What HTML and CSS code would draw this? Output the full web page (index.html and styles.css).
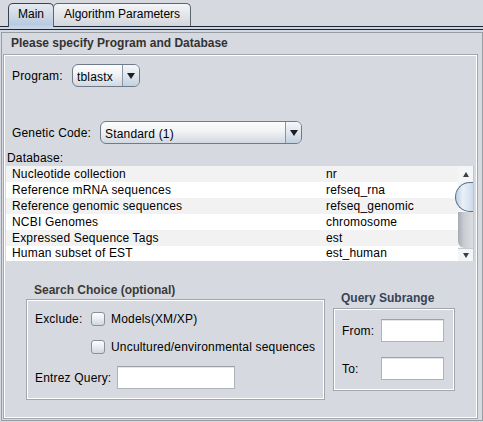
FILE: index.html
```html
<!DOCTYPE html>
<html>
<head>
<meta charset="utf-8">
<link rel="stylesheet" href="styles.css">
</head>
<body>
<div class="tabs">
  <div class="tab sel">Main</div>
  <div class="tab">Algorithm Parameters</div>
</div>
<div class="band"></div>
<div class="content">
  <div class="title">Please specify Program and Database</div>
  <div class="panel">
    <div class="row prog">
      <span class="lbl w-prog">Program:</span>
      <div class="combo c-prog"><span class="val">tblastx</span><span class="arrow"><span class="tri-dn"></span></span></div>
    </div>
    <div class="row gen">
      <span class="lbl w-gen">Genetic Code:</span>
      <div class="combo c-gen"><span class="val">Standard (1)</span><span class="arrow"><span class="tri-dn"></span></span></div>
    </div>
    <div class="dblabel">Database:</div>
    <div class="dbwrap">
      <div class="table">
        <div class="tr"><span>Nucleotide collection</span><span>nr</span></div>
        <div class="tr"><span>Reference mRNA sequences</span><span>refseq_rna</span></div>
        <div class="tr"><span>Reference genomic sequences</span><span>refseq_genomic</span></div>
        <div class="tr"><span>NCBI Genomes</span><span>chromosome</span></div>
        <div class="tr"><span>Expressed Sequence Tags</span><span>est</span></div>
        <div class="tr last"><span>Human subset of EST</span><span>est_human</span></div>
      </div>
      <div class="sb">
        <div class="sb-btn top"><span class="tri-up"></span></div>
        <div class="sb-thumb"></div>
        <div class="sb-track"></div>
        <div class="sb-btn bot"><span class="tri-dn small"></span></div>
      </div>
    </div>
    <div class="lower">
      <div class="col search">
        <div class="gtitle">Search Choice (optional)</div>
        <div class="gbox sbox">
          <div class="srow r1">
            <span class="lbl w-exc">Exclude:</span>
            <span class="check"></span>
            <span class="ctext">Models(XM/XP)</span>
          </div>
          <div class="srow r2">
            <span class="check indent"></span>
            <span class="ctext">Uncultured/environmental sequences</span>
          </div>
          <div class="srow r3">
            <span class="lbl w-ent">Entrez Query:</span>
            <span class="input i-ent"></span>
          </div>
        </div>
      </div>
      <div class="col query">
        <div class="gtitle blue">Query Subrange</div>
        <div class="gbox qbox">
          <div class="srow q1">
            <span class="lbl w-q">From:</span>
            <span class="input i-q"></span>
          </div>
          <div class="srow q2">
            <span class="lbl w-q">To:</span>
            <span class="input i-q"></span>
          </div>
        </div>
      </div>
    </div>
  </div>
</div>
</body>
</html>
```
FILE: styles.css
```css
* { box-sizing: border-box; }
html, body { margin: 0; padding: 0; }
body {
  width: 483px;
  height: 422px;
  overflow: hidden;
  background: #d6d9df;
  font-family: "Liberation Sans", Arial, sans-serif;
  font-size: 12px;
  letter-spacing: 0.18px;
  color: #000;
}

/* Tabs */
.tabs {
  display: flex;
  align-items: flex-end;
  height: 27px;
  padding-left: 8px;
  border-bottom: 1px solid #1f2431;
}
.tab {
  height: 23px;
  line-height: 21px;
  padding: 0 10px;
  border: 1px solid #5e6470;
  border-bottom: none;
  border-radius: 5px 5px 0 0;
  background: linear-gradient(#f3f5f7, #dfe2e7 60%, #d3d7dd);
  color: #000;
  margin-left: -1px;
  letter-spacing: 0;
}
.tab.sel {
  margin-left: 0;
  padding: 0 9px;
  height: 24px;
  margin-bottom: -1px;
  border-color: #3a4150;
  background: linear-gradient(#e4e9ef, #cbd7e4 55%, #b7cadf 90%, #c6d6e8);
}
.band {
  height: 3px;
  background: #c6d6e8;
  border-bottom: 1px solid #1f2431;
}

/* Content */
.content {
  margin: 2px 0 0 1px;
  width: 482px;
  height: 389px;
  border: 1px solid #989ca3;
  display: flex;
  flex-direction: column;
}
.title {
  padding: 3px 0 0 9px;
  line-height: 14px;
  height: 17px;
  margin-bottom: 4px;
  font-weight: bold;
  letter-spacing: 0;
  color: #333;
}
.panel {
  flex: 1;
  margin: 0 4px 1px 1px;
  border: 1px solid #a3a6aa;
  box-shadow: inset 1px 1px 0 #fff, inset -1px -1px 0 #fff;
  display: flex;
  flex-direction: column;
}

.row {
  display: flex;
  align-items: center;
  padding-left: 8px;
  height: 23px;
}
.row.prog { margin-top: 9px; }
.row.gen { margin-top: 34px; }
.lbl { display: inline-block; line-height: 16px; }
.w-prog { width: 60px; }
.w-gen { width: 88px; }

.combo {
  display: flex;
  height: 23px;
  border: 1px solid #6f7b8b;
  border-radius: 6px;
  background: linear-gradient(#fdfdfd, #f0f2f5 45%, #dde2e8 80%, #d2d8e0);
  overflow: hidden;
}
.combo .val {
  flex: 1;
  padding-left: 4px;
  line-height: 23px;
  padding-top: 1px;
}
.combo .arrow {
  width: 17px;
  border-left: 1px solid #8b96a4;
  display: flex;
  align-items: center;
  justify-content: center;
  background: linear-gradient(#f5f7fa, #dfe6ee 50%, #c3d0de);
}
.c-prog { width: 68px; }
.c-gen { width: 202px; }
.c-gen .arrow { width: 16px; }

.tri-dn {
  width: 0; height: 0;
  border-left: 4px solid transparent;
  border-right: 4px solid transparent;
  border-top: 6px solid #1c1f26;
  margin-top: 1px;
}
.tri-dn.small {
  border-left-width: 3px;
  border-right-width: 3px;
  border-top-width: 5px;
  border-top-color: #3a3f48;
}
.tri-up {
  width: 0; height: 0;
  border-left: 3px solid transparent;
  border-right: 3px solid transparent;
  border-bottom: 5px solid #3a3f48;
}

.dblabel {
  margin-top: 6px;
  padding-left: 3px;
  height: 16px;
  line-height: 16px;
}
.dbwrap {
  display: flex;
  margin-left: 2px;
  width: 468px;
  height: 95px;
}
.table {
  flex: 1;
  height: 95px;
  overflow: hidden;
}
.tr {
  display: grid;
  grid-template-columns: 314px 1fr;
  height: 16px;
  line-height: 16px;
  padding-left: 6px;
  background: #fff;
}
.tr.last { height: 15px; line-height: 15px; }
.tr:nth-child(odd) { background: #f2f2f2; }

.sb {
  width: 16px;
  display: flex;
  flex-direction: column;
  background: #f3f4f6;
  border-right: 1px solid #c3c6cb;
}
.sb-btn {
  display: flex;
  align-items: center;
  justify-content: center;
  background: #f4f5f7;
}
.sb-btn.top { height: 16px; }
.sb-btn.bot { height: 13px; border-top: 1px solid #c8ccd2; }
.sb-thumb {
  height: 30px;
  margin-left: -3px;
  border: 1px solid #5a718b;
  border-right: none;
  border-radius: 15px 0 0 15px / 15px 0 0 15px;
  background: linear-gradient(90deg, #bccfe3, #e9f0f7 40%, #d7e3ef 80%, #c8d8e9);
}
.sb-track {
  flex: 1;
  border-radius: 0 0 0 7px;
  background: linear-gradient(90deg, #a7abb2, #c9ccd1 40%, #dcdee2);
}

/* Lower group boxes */
.lower {
  display: flex;
  align-items: flex-start;
  margin-left: 22px;
}
.col.search { margin-top: 22px; }
.col.query { margin-top: 30px; margin-left: 8px; }
.gtitle {
  padding-left: 8px;
  height: 14px;
  line-height: 14px;
  font-weight: bold;
  letter-spacing: 0;
  color: #3b3a37;
}
.gtitle.blue { color: #374357; }
.gbox {
  border: 1px solid #a3a6aa;
  box-shadow: inset 1px 1px 0 #fff, inset -1px -1px 0 #fff;
}
.sbox {
  margin-top: 2px;
  width: 299px;
  padding: 10px 0 10px 8px;
}
.qbox {
  margin-top: 3px;
  width: 122px;
  padding: 10px 0 10px 8px;
}
.srow {
  display: flex;
  align-items: center;
}
.r1, .r2 { height: 17px; }
.r2 { margin-top: 11px; }
.r3 { margin-top: 11px; height: 23px; }
.q1, .q2 { height: 23px; }
.q2 { margin-top: 15px; }

.w-exc { width: 56px; }
.w-ent { width: 82px; }
.w-q { width: 39px; }

.check {
  width: 14px;
  height: 14px;
  border: 1px solid #8a9099;
  border-radius: 3px;
  background: linear-gradient(#fdfdfe, #e9ecf0 50%, #d3d8df);
}
.check.indent { margin-left: 56px; }
.ctext { margin-left: 6px; line-height: 16px; }

.input {
  display: block;
  height: 23px;
  background: #fff;
  border: 1px solid #b0b3b8;
  border-top-color: #9ea2a8;
  box-shadow: inset 0 1px 0 #e3e5e8;
}
.i-ent { width: 118px; }
.i-q { width: 63px; }
```
